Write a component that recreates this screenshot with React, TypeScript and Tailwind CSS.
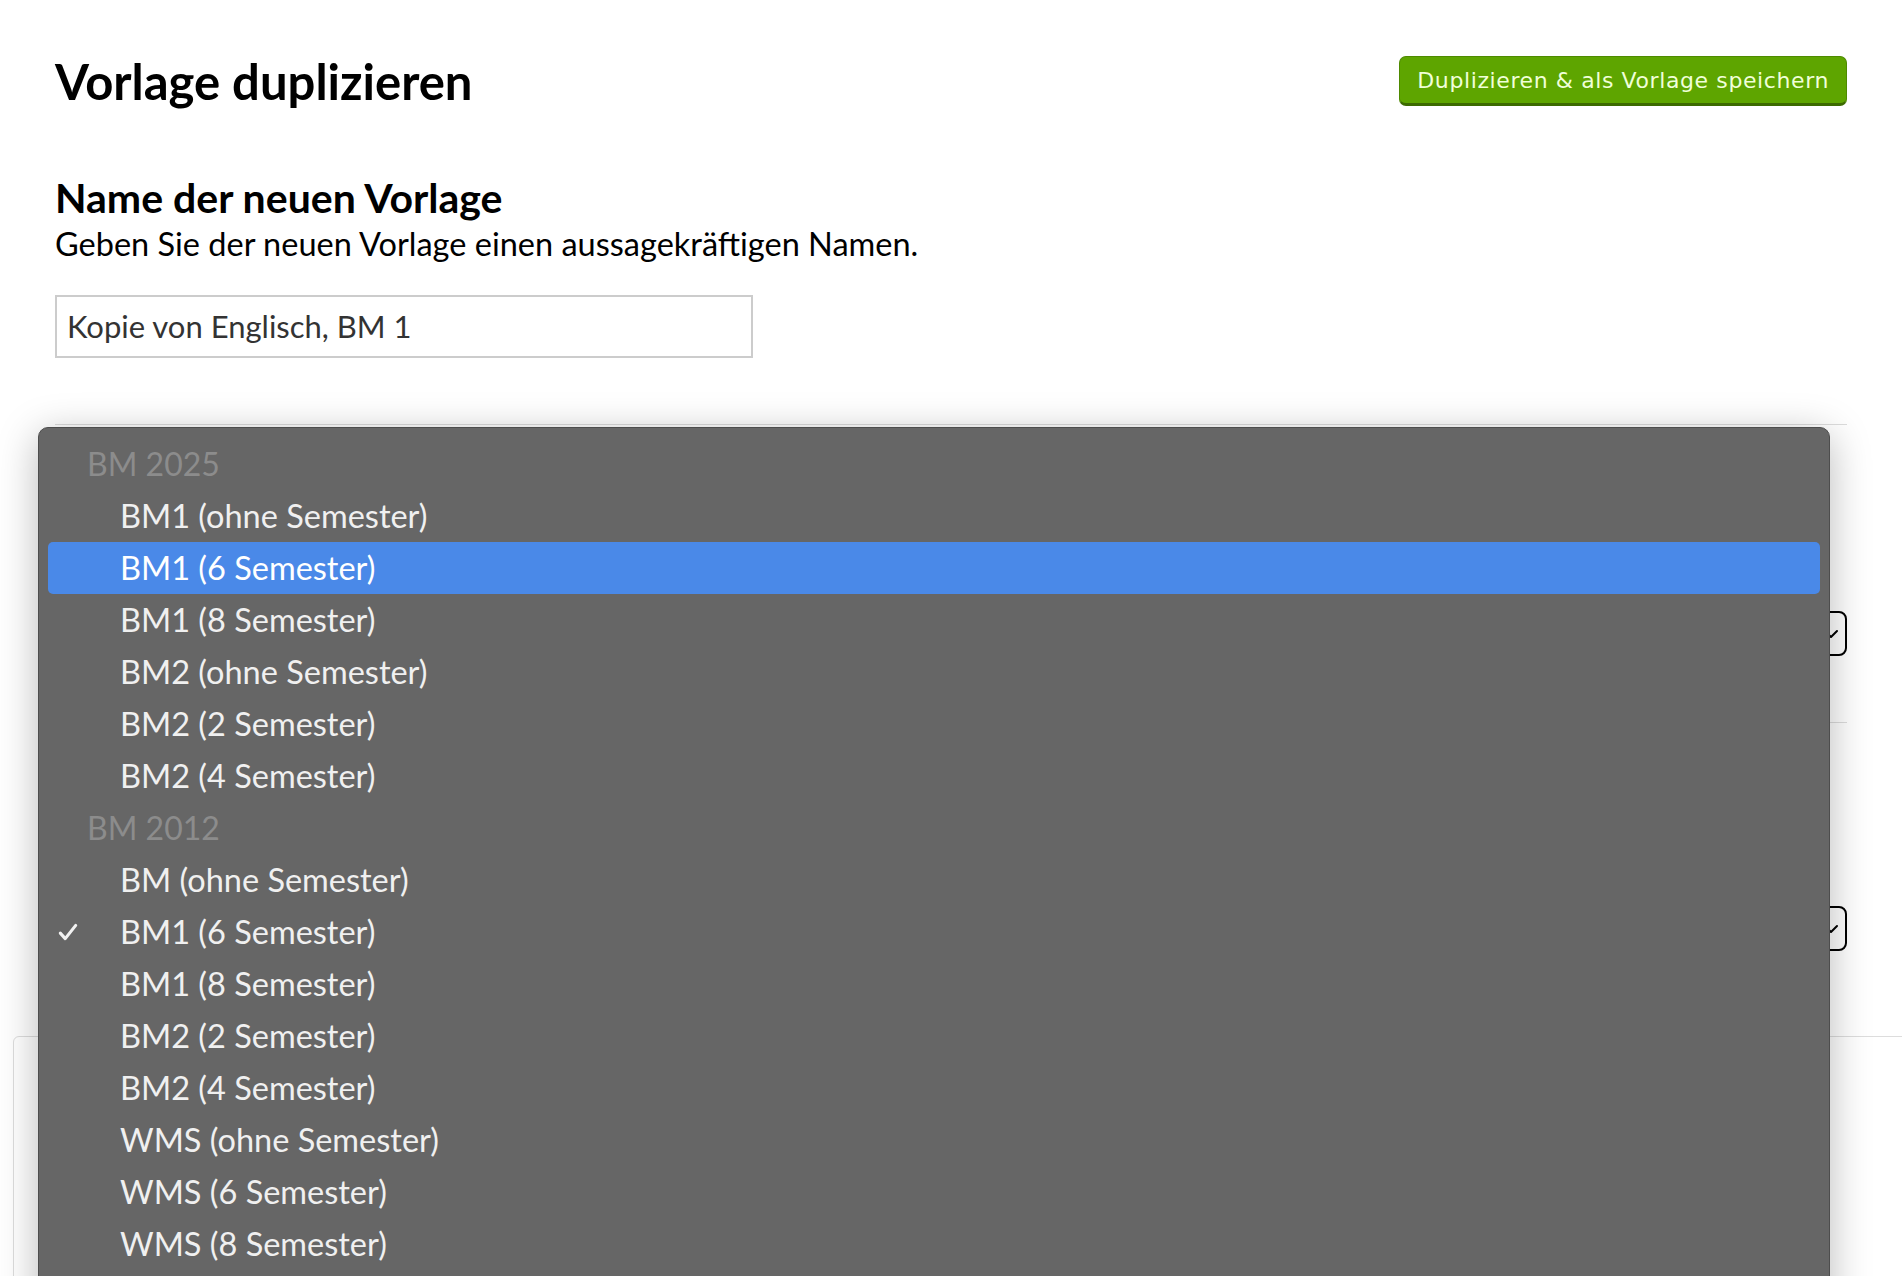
import React from "react";

type Group = { label: string; items: string[] };

const groups: Group[] = [
  {
    label: "BM 2025",
    items: [
      "BM1 (ohne Semester)",
      "BM1 (6 Semester)",
      "BM1 (8 Semester)",
      "BM2 (ohne Semester)",
      "BM2 (2 Semester)",
      "BM2 (4 Semester)",
    ],
  },
  {
    label: "BM 2012",
    items: [
      "BM (ohne Semester)",
      "BM1 (6 Semester)",
      "BM1 (8 Semester)",
      "BM2 (2 Semester)",
      "BM2 (4 Semester)",
      "WMS (ohne Semester)",
      "WMS (6 Semester)",
      "WMS (8 Semester)",
    ],
  },
];

const Chevron = () => (
  <svg width="16" height="10" viewBox="0 0 16 10" fill="none" className="text-black">
    <path d="M2 2l6 6 6-6" stroke="currentColor" strokeWidth="2" strokeLinecap="round" strokeLinejoin="round" />
  </svg>
);

const Tick = () => (
  <svg width="22" height="22" viewBox="0 0 20 20" fill="none">
    <path d="M3 11l4.5 5L17 4" stroke="#f2f2f2" strokeWidth="2.8" strokeLinecap="round" strokeLinejoin="round" />
  </svg>
);

// the select boxes sit under the open menu, only their right edge shows
const FakeSelect = () => (
  <div className="flex h-[45px] w-full items-center justify-end rounded-[8px] border-2 border-black pr-[6px]">
    <Chevron />
  </div>
);

const SelectMenu = () => {
  return (
    <div className="absolute left-[38px] top-[427px] h-[900px] w-[1792px] rounded-[10px] border border-[#4d4d4d] bg-[#666666] shadow-[0_8px_40px_rgba(0,0,0,0.28)]">
      <div className="px-[9px] pt-[10px]">
        {groups.map((group, gi) => (
          <div key={group.label}>
            <div className="flex h-[52px] items-center pl-[39px] text-[32px] text-[#8c8c8c]">
              {group.label}
            </div>
            {group.items.map((item, ii) => {
              const active = gi === 0 && ii === 1;
              const checked = gi === 1 && ii === 1;
              return (
                <div
                  key={item + gi}
                  className={
                    active
                      ? "relative flex h-[52px] items-center rounded-[5px] bg-[#4a89e8] pl-[72px] text-[32.5px] text-white"
                      : "relative flex h-[52px] items-center pl-[72px] text-[32.5px] text-[#f0f0f0]"
                  }
                >
                  {checked && (
                    <span className="absolute left-[9px] top-[15px]">
                      <Tick />
                    </span>
                  )}
                  {item}
                </div>
              );
            })}
          </div>
        ))}
      </div>
    </div>
  );
};

export default function App() {
  return (
    <div className="relative h-[1276px] w-[1902px] overflow-hidden bg-white font-['Lato','Noto_Sans',sans-serif] text-black">
      <div className="px-[55px]">
        <div className="flex items-center justify-between pt-[56px]">
          <h1 className="text-[49px] font-bold leading-[50px]">Vorlage duplizieren</h1>
          <button className="h-[50px] rounded-[7px] border border-[#4e8a00] border-b-[3px] border-b-[#3c6a00] bg-[#5ea500] px-[17px] font-['DejaVu_Sans',sans-serif] text-[22px] tracking-[0.6px] text-[#f0ffd8]">
            Duplizieren &amp; als Vorlage speichern
          </button>
        </div>

        <div className="mt-[70px]">
          <h2 className="text-[41px] font-bold leading-[44px]">Name der neuen Vorlage</h2>
          <p className="mt-[4px] text-[32.5px] leading-[40px]">
            Geben Sie der neuen Vorlage einen aussagekräftigen Namen.
          </p>
          <div className="mt-[31px] flex h-[63px] w-[698px] items-center border-2 border-[#cccccc] px-[10px] text-[31px] text-[#333]">
            Kopie von Englisch, BM 1
          </div>
        </div>

        <div className="mt-[66px] border-t border-[#dddddd]">
          <div className="border-b border-[#dddddd] pb-[66px] pt-[40px]">
            <div className="h-[88px]" />
            <div className="mt-[58px]">
              <FakeSelect />
            </div>
          </div>
          <div className="pb-[85px] pt-[40px]">
            <div className="h-[88px]" />
            <div className="mt-[55px]">
              <FakeSelect />
            </div>
          </div>
        </div>
      </div>

      <div className="ml-[13px] h-[400px] w-[1900px] rounded-tl-[6px] border border-[#dddddd] bg-white" />

      <SelectMenu />
    </div>
  );
}
